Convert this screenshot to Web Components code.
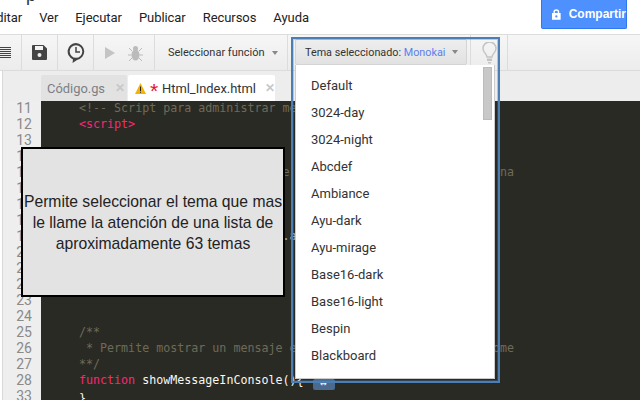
<!DOCTYPE html>
<html>
<head>
<meta charset="utf-8">
<style>
html, body { margin: 0; padding: 0; }
body { width: 640px; height: 400px; overflow: hidden; font-family: Roboto, "Liberation Sans", sans-serif; }
</style>
</head>
<body>
<script-editor></script-editor>
<script>
function define(name, html) {
  customElements.define(name, class extends HTMLElement {
    constructor() {
      super();
      this.attachShadow({mode: 'open'}).innerHTML = html;
    }
  });
}

define('menu-bar', `
<style>
:host { display: flex; height: 34px; background: #fff; position: relative; box-sizing: border-box; }
.title { position: absolute; left: 26px; top: -15px; font: 18px "Liberation Sans", sans-serif; color: #333; }
nav { display: flex; gap: 17px; margin-left: -11px; padding-top: 10px; font-size: 13px; letter-spacing: -0.06px; line-height: 16px; color: #222; flex: 1; }
button { margin: 0 13px 5px 0; width: 86px; border: 1px solid #3079ed; border-top: 0; border-radius: 0 0 2px 2px; background: #4d90fe; color: #fff; font: bold 12px "Liberation Sans", sans-serif; display: flex; align-items: center; justify-content: flex-start; padding: 0 0 0 10px; gap: 8px; box-sizing: border-box; }
svg { display: block; }
</style>
<span class="title">p</span>
<nav><span>Editar</span><span>Ver</span><span>Ejecutar</span><span>Publicar</span><span>Recursos</span><span>Ayuda</span></nav>
<button><svg width="9" height="11" viewBox="0 0 9 11"><path fill="#fff" d="M1.5 4V3a3 3 0 0 1 6 0v1H9v7H0V4zM3 4h3V3a1.5 1.5 0 0 0-3 0z"/><circle cx="4.5" cy="7.5" r="1.2" fill="#4d90fe"/></svg>Compartir</button>
`);

define('tool-bar', `
<style>
:host { display: flex; height: 37px; box-sizing: border-box; border-top: 1px solid #dcdcdc; border-bottom: 1px solid #dcdcdc; background: linear-gradient(#f6f6f6, #ececec); color: #333; font-size: 11px; white-space: nowrap; }
.cell { display: flex; align-items: center; justify-content: center; border-right: 1px solid #dcdcdc; box-sizing: border-box; flex: none; }
svg { display: block; flex: none; }
.arrow { width: 0; height: 0; border: 3px solid transparent; border-top: 4px solid #888; border-bottom: 0; margin-left: 7px; }
.fn { width: 133px; justify-content: flex-start; padding-left: 13px; }
.theme { width: 183px; justify-content: flex-start; padding-left: 7px; }
.bulb { width: 37px; }
.fill { flex: 1; }
</style>
<div class="cell" style="width:22px;justify-content:flex-start">
  <svg width="11" height="12" viewBox="0 0 11 12"><path stroke="#444" stroke-width="1" d="M0 .5h11M0 2.5h11M0 4.5h11M0 6.5h11M0 8.5h11M0 10.5h11"/></svg>
</div>
<div class="cell" style="width:36px">
  <svg width="15" height="15" viewBox="0 0 15 15"><path fill="#444" d="M0 1a1 1 0 0 1 1-1h10.500L15 3.500V14a1 1 0 0 1-1 1H1a1 1 0 0 1-1-1zM3 1v4h8V1z"/><circle cx="7.500" cy="10" r="2" fill="#eee"/></svg>
</div>
<div class="cell" style="width:36px">
  <svg width="18" height="20" viewBox="0 0 18 20"><path fill="#444" d="M9 0a8.500 8.500 0 0 1 1 16.900L5.500 20l.5-3.600A8.500 8.500 0 0 1 9 0z"/><circle cx="9" cy="8.500" r="6.300" fill="#f2f2f2"/><path stroke="#444" stroke-width="1.500" fill="none" d="M9 4v5h4"/></svg>
</div>
<div class="cell" style="width:61px;gap:13px">
  <svg width="10" height="12" viewBox="0 0 10 12"><path fill="#c4c4c4" d="M0 0l10 6-10 6z"/></svg>
  <svg width="15" height="16" viewBox="0 0 15 16"><ellipse cx="7.500" cy="10" rx="4" ry="5.500" fill="#bbb"/><circle cx="7.500" cy="3.500" r="2.500" fill="#bbb"/><path stroke="#bbb" fill="none" d="M4 6L1 3M11 6l3-3M3.500 10H0M11.500 10H15M4 13l-3 3M11 13l3 3"/></svg>
</div>
<div class="cell fn">Seleccionar función<span class="arrow"></span></div>
<div class="cell theme"><slot name="theme"></slot></div>
<div class="cell bulb">
  <svg width="15" height="22" viewBox="0 0 15 22"><path fill="none" stroke="#c4c4c4" stroke-width="1.500" d="M5 15c0-3-4-4.500-4-8.500a6.500 6.500 0 0 1 13 0c0 4-4 5.500-4 8.500z"/><path fill="#c4c4c4" d="M5 16.500h5V19H5zM6 20h3v1.500H6z"/></svg>
</div>
<div class="fill"></div>
`);

define('theme-button', `
<style>
:host { display: flex; align-items: center; width: 172px; height: 26px; box-sizing: border-box; margin-top: -1px; padding-left: 9px; border: 1px solid #d4d4d4; border-radius: 2px; background: linear-gradient(#eee, #e2e2e2); color: #333; font-size: 10.8px; white-space: pre; }
b { font-weight: 400; color: #5a7ff0; }
.arrow { width: 0; height: 0; border: 3px solid transparent; border-top: 4px solid #888; border-bottom: 0; margin-left: 7px; }
</style><span>Tema seleccionado: </span><b>Monokai</b><span class="arrow"></span>`);

define('file-tabs', `
<style>
:host { display: flex; height: 30px; box-sizing: border-box; background: #ededed; padding: 4px 0 0 38px; gap: 1px; border-left: 1px solid #d8d8d8; margin-left: 2px; font-size: 12.9px; }
div { display: flex; align-items: center; border-radius: 2px 2px 0 0; box-sizing: border-box; height: 26px; white-space: nowrap; }
.off { width: 86px; background: #e2e2e2; color: #7b7f85; padding-left: 6px; }
.on { width: 147px; background: #fff; color: #333; padding-left: 7px; }
i { font-style: normal; color: #c8c8c8; font-weight: bold; font-size: 12px; }
.star { color: #e8112d; font-size: 21px; margin: 0 4px 0 4px; font-family: "Liberation Sans", sans-serif; font-weight: 400; line-height: 14px; padding-top: 5px; width: 8px; }
svg { display: block; flex: none; }
</style>
<div class="off">Código.gs<i style="margin-left:10px">✕</i></div>
<div class="on">
  <svg width="11" height="11" viewBox="0 0 11 11"><path fill="#f5b400" d="M5.500 0L11 11H0z"/><path fill="#222" d="M5 3.500h1V8H5zM5 8.800h1v1H5z"/></svg>
  <span class="star">*</span>Html_Index.html<i style="margin-left:9px">✕</i>
</div>
`);

define('code-editor', `
<style>
:host { display: flex; flex: 1; min-height: 0; overflow: hidden; margin-left: 2px; border-left: 1px solid #d8d8d8; font: 11.67px/16px "DejaVu Sans Mono", monospace; }
.gutter { width: 38px; flex: none; background: #eeeeee; color: #8a8a8a; font-family: Roboto, sans-serif; font-size: 14px; text-align: right; padding-right: 9px; box-sizing: border-box; margin-top: -1px; }
.code { flex: 1; background: #2a2a24; color: #f8f8f2; }
pre { margin: -1px 0 0; padding-left: 38px; font: inherit; }
.c { color: #6e6a58; }
.k { color: #f92672; }
.d { color: #b0b0a4; }
.fold { background: #4a6a8e; color: #eef; border-radius: 2px; font-size: 11px; display: inline-block; width: 22px; height: 11px; line-height: 10px; text-align: center; vertical-align: -3px; margin-left: 2px; }
</style>
<div class="gutter" id="g"></div>
<div class="code"><pre><span class="c">&lt;!-- Script para administrar mensajes --&gt;</span>
<span class="k">&lt;script&gt;</span>


<span class="c">                             e                              na</span>



<span class="d">                             .a</span>





<span class="c">/**</span>
<span class="c"> * Permite mostrar un mensaje en la consola del browser Chrome</span>
<span class="c">**/</span>
<span class="k">function</span> showMessageInConsole(){ <span class="fold">↔</span>
}</pre></div>
`);

define('theme-menu', `
<style>
:host { display: block; position: absolute; left: 295px; top: 65px; width: 200px; height: 314px; box-sizing: border-box; background: #fff; border: 1px solid #ccc; border-top: 0; overflow: hidden; color: #333; font-size: 13px; }
ul { list-style: none; margin: 0; padding: 7px 0 0 15px; }
li { height: 27px; line-height: 27px; }
.thumb { position: absolute; right: 2px; top: 2px; width: 9px; height: 53px; background: #c8c8c8; border: 1px solid #bbb; box-sizing: border-box; }
</style>
<ul>
<li>Default</li><li>3024-day</li><li>3024-night</li><li>Abcdef</li><li>Ambiance</li><li>Ayu-dark</li><li>Ayu-mirage</li><li>Base16-dark</li><li>Base16-light</li><li>Bespin</li><li>Blackboard</li><li>Brewer</li>
</ul>
<div class="thumb"></div>
`);

define('focus-ring', `
<style>
:host { display: block; position: absolute; left: 291px; top: 37px; width: 209px; height: 346px; box-sizing: border-box; border: 2px solid #4a7eb5; box-shadow: inset 0 0 0 1px rgba(74,126,181,.35); }
</style>
`);

define('info-callout', `
<style>
:host { display: flex; position: absolute; left: 21px; top: 147px; width: 264px; height: 150px; box-sizing: border-box; border: 2px solid #000; background: #e3e3e3; align-items: center; justify-content: center; text-align: center; font: 15.7px/21px "Liberation Sans", sans-serif; color: #222; }
</style>
<slot></slot>
`);

define('script-editor', `
<style>
:host { display: flex; flex-direction: column; width: 640px; height: 400px; position: relative; overflow: hidden; background: #fff; }
</style>
<menu-bar></menu-bar>
<tool-bar><theme-button slot="theme"></theme-button></tool-bar>
<file-tabs></file-tabs>
<code-editor></code-editor>
<info-callout>Permite seleccionar el tema que mas<br>le llame la atención de una lista de<br>aproximadamente 63 temas</info-callout>
<theme-menu></theme-menu>
<focus-ring></focus-ring>
`);

// numeros de linea
var root = document.querySelector('script-editor').shadowRoot;
var gutter = root.querySelector('code-editor').shadowRoot.getElementById('g');
var nums = [];
for (var i = 11; i <= 28; i++) nums.push(i);
nums.push(33);
gutter.innerHTML = nums.join('<br>');
</script>
</body>
</html>
